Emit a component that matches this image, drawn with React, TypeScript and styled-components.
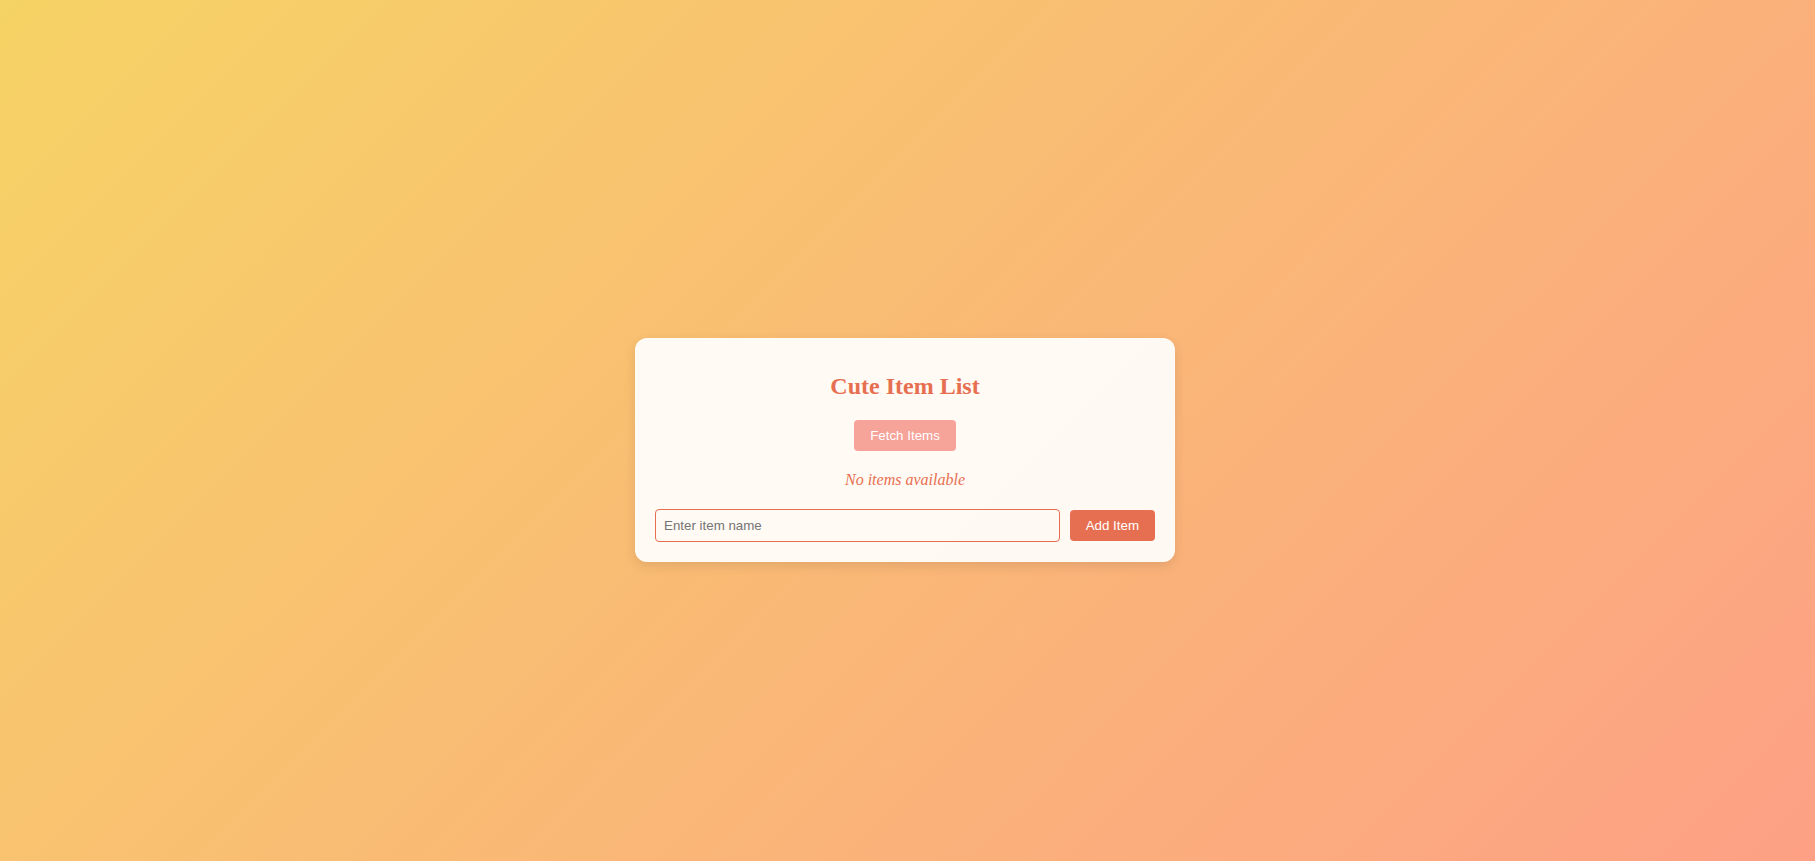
import React, { useState } from "react";
import styled, { createGlobalStyle } from "styled-components";

const GlobalStyle = createGlobalStyle`
  html, body {
    margin: 0;
    padding: 0;
  }
  body {
    font-family: "Liberation Serif", "Times New Roman", serif;
    background: linear-gradient(135deg, #f6d365 0%, #fda085 100%);
    min-height: 100vh;
  }
`;

const Page = styled.div`
  min-height: 100vh;
  box-sizing: border-box;
  padding: 38px 5px 0 0;
  display: flex;
  align-items: center;
  justify-content: center;
`;

const Card = styled.div`
  width: 500px;
  padding: 20px;
  background: rgba(255, 255, 255, 0.92);
  border-radius: 12px;
  box-shadow: 0 4px 12px rgba(0, 0, 0, 0.1);
  text-align: center;
`;

const Title = styled.h2`
  margin: 15px 0 20px;
  font-size: 24px;
  font-weight: bold;
  color: #e76f51;
`;

const Button = styled.button<{ $light?: boolean }>`
  padding: 8px 16px;
  border: none;
  border-radius: 4px;
  font-family: "Liberation Sans", Arial, sans-serif;
  font-size: 13.33px;
  color: #ffffff;
  background: ${(p) => (p.$light ? "#f6a39a" : "#e76f51")};
  cursor: pointer;
`;

const Empty = styled.p`
  margin: 20px 0;
  font-size: 16px;
  font-style: italic;
  color: #e76f51;
`;

const Form = styled.form`
  display: flex;
  align-items: center;
  gap: 10px;
`;

const Input = styled.input`
  flex: 1;
  padding: 8px;
  border: 1px solid #e76f51;
  border-radius: 4px;
  background: transparent;
  font-family: "Liberation Sans", Arial, sans-serif;
  font-size: 13.33px;
  color: #333;
  outline: none;

  &::placeholder {
    color: #757575;
  }
`;

export default function App() {
  const [items] = useState<string[]>([]);
  const [name, setName] = useState("");

  return (
    <>
      <GlobalStyle />
      <Page>
        <Card>
          <Title>Cute Item List</Title>
          <Button $light type="button">
            Fetch Items
          </Button>
          {items.length === 0 && <Empty>No items available</Empty>}
          <Form onSubmit={(e) => e.preventDefault()}>
            <Input
              placeholder="Enter item name"
              value={name}
              onChange={(e) => setName(e.target.value)}
            />
            <Button type="submit">Add Item</Button>
          </Form>
        </Card>
      </Page>
    </>
  );
}
